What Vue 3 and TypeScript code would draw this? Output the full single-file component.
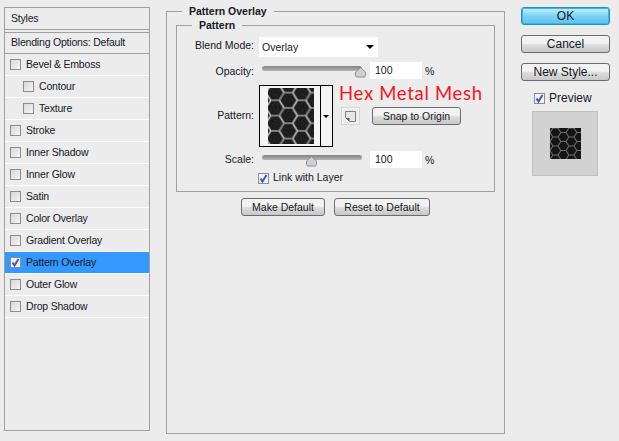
<script setup lang="ts">
interface Row { label: string; indent?: boolean; checked?: boolean; active?: boolean }
const rows: Row[] = [
  { label: 'Bevel & Emboss' },
  { label: 'Contour', indent: true },
  { label: 'Texture', indent: true },
  { label: 'Stroke' },
  { label: 'Inner Shadow' },
  { label: 'Inner Glow' },
  { label: 'Satin' },
  { label: 'Color Overlay' },
  { label: 'Gradient Overlay' },
  { label: 'Pattern Overlay', checked: true, active: true },
  { label: 'Outer Glow' },
  { label: 'Drop Shadow' },
]
</script>

<template>
  <div class="dialog">
    <aside class="styles">
      <div class="head">Styles</div>
      <div class="blend">Blending Options: Default</div>
      <div v-for="r in rows" :key="r.label" class="row" :class="{ indent: r.indent, active: r.active }">
        <span class="check" :class="{ on: r.checked }">
          <svg v-if="r.checked" viewBox="0 0 9 9" width="9" height="9"><path d="M1.5 4.5l2 3 4-6.5" fill="none" stroke="#3f55d0" stroke-width="2" /></svg>
        </span>
        <span class="rowlabel">{{ r.label }}</span>
      </div>
    </aside>

    <main class="center">
      <fieldset class="outer">
        <legend class="b">Pattern Overlay</legend>
        <fieldset class="inner">
          <legend class="b">Pattern</legend>
          <div class="form">
            <label>Blend Mode:</label>
            <div class="select"><span>Overlay</span><i class="caret"></i></div>

            <label class="op">Opacity:</label>
            <div class="slidewrap op">
              <div class="slider end">
                <svg class="thumb" width="11" height="11" viewBox="0 0 11 11"><path d="M5.5.7l5 4.3v3.5q0 1.5-1.5 1.5H2q-1.5 0-1.5-1.5V5z" fill="#d0d0d0" stroke="#909090" /></svg>
              </div>
              <span class="num">100</span><span class="pct">%</span>
            </div>

            <label class="pl">Pattern:</label>
            <div class="patternline">
              <div class="swatchbox">
                <span class="swatchcell">
                  <svg width="46" height="56" class="mesh">
                    <defs>
                      <filter id="grain" x="0" y="0" width="100%" height="100%">
                        <feTurbulence type="fractalNoise" baseFrequency="0.9" numOctaves="2" seed="4" />
                        <feColorMatrix values="0 0 0 0 1  0 0 0 0 1  0 0 0 0 1  .5 0 0 0 -.12" />
                      </filter>
                      <pattern id="hexa" width="28" height="18" patternUnits="userSpaceOnUse" patternTransform="translate(-2 -3) scale(.95 .85)">
                        <rect width="28" height="18" fill="#141414" />
                        <path d="M0 9L5 0H14L19 9H28M0 9L5 18H14L19 9" fill="none" stroke="#7c7c7c" stroke-width="2.2" />
                        <path d="M0 9L5 0M14 0L19 9M5 18L0 9" fill="none" stroke="#dcdcdc" stroke-width="1" />
                      </pattern>
                    </defs>
                    <rect width="46" height="56" fill="url(#hexa)" />
                    <rect width="46" height="56" filter="url(#grain)" opacity=".35" />
                  </svg>
                </span>
                <span class="swatcharrow"><i></i></span>
              </div>
              <div class="patternright">
                <div class="hex">Hex Metal Mesh</div>
                <div class="snapline">
                  <span class="iconbtn">
                    <svg width="11" height="11" viewBox="0 0 11 11"><path d="M.5.5h10v10h-6l-4-4z" fill="#e6e6e6" stroke="#808080" /><path d="M1 7h3.5v3.5z" fill="#555" /></svg>
                  </span>
                  <button class="btn snap">Snap to Origin</button>
                </div>
              </div>
            </div>

            <label class="sc">Scale:</label>
            <div class="slidewrap sc">
              <div class="slider mid">
                <svg class="thumb" width="11" height="11" viewBox="0 0 11 11"><path d="M5.5.7l5 4.3v3.5q0 1.5-1.5 1.5H2q-1.5 0-1.5-1.5V5z" fill="#d0d0d0" stroke="#909090" /></svg>
              </div>
              <span class="num">100</span><span class="pct">%</span>
            </div>

            <div class="linkline">
              <span class="check on"><svg viewBox="0 0 9 9" width="9" height="9"><path d="M1.5 4.5l2 3 4-6.5" fill="none" stroke="#3f55d0" stroke-width="2" /></svg></span>
              <span>Link with Layer</span>
            </div>
          </div>
        </fieldset>
        <div class="defaults">
          <button class="btn make">Make Default</button>
          <button class="btn reset">Reset to Default</button>
        </div>
      </fieldset>
    </main>

    <aside class="actions">
      <button class="btn big ok">OK</button>
      <button class="btn big">Cancel</button>
      <button class="btn big">New Style...</button>
      <div class="previewline">
        <span class="check on"><svg viewBox="0 0 9 9" width="9" height="9"><path d="M1.5 4.5l2 3 4-6.5" fill="none" stroke="#3f55d0" stroke-width="2" /></svg></span>
        <span>Preview</span>
      </div>
      <div class="thumbbox">
        <svg width="31" height="31">
          <defs>
            <pattern id="hexb" width="28" height="18" patternUnits="userSpaceOnUse" patternTransform="scale(.57 .5)">
              <rect width="28" height="18" fill="#141414" />
              <path d="M0 9L5 0H14L19 9H28M0 9L5 18H14L19 9" fill="none" stroke="#6e6e6e" stroke-width="1.8" />
            </pattern>
          </defs>
          <rect width="31" height="31" fill="url(#hexb)" />
        </svg>
      </div>
    </aside>
  </div>
</template>

<style>
html, body { margin: 0; background: #ececec; }
</style>

<style scoped>
.dialog {
  width: 619px; height: 441px; box-sizing: border-box; overflow: hidden;
  display: flex; padding: 7px 0 0 4px; background: #ececec; color: #16181f;
  font: 10.5px/14px "Liberation Sans", Tahoma, sans-serif;
}
.b { font-weight: 700; }
.styles {
  width: 146px; height: 424px; box-sizing: border-box; flex: none;
  border: 1px solid #a0a0a0; letter-spacing: -.2px;
}
.head { height: 21px; line-height: 20px; padding-left: 6px; border-bottom: 1px solid #a0a0a0; }
.blend { height: 20px; line-height: 19px; padding-left: 6px; margin-top: 2px; border-top: 1px solid #a0a0a0; border-bottom: 1px solid #a0a0a0; }
.row { height: 21px; display: flex; align-items: center; gap: 5px; padding-left: 5px; border-bottom: 1px solid #fff; }
.rowlabel { padding-bottom: 1px; }
.row.indent { padding-left: 18px; }
.row.active { background: #3399ff; }
.check {
  width: 9px; height: 9px; flex: none; border: 1px solid #8c8c8c; background: linear-gradient(135deg, #d8d8d8, #f6f6f6);
  display: inline-flex;
}
.check.on { background: #f2f2f2; }
.center { width: 339px; margin-left: 16px; flex: none; }
fieldset { margin: 0; min-width: 0; border: 1px solid #a0a0a0; }
legend { padding: 0 7px; line-height: 14px; }
.outer { height: 430px; box-sizing: border-box; padding: 0 6px 0 9px; margin-top: -3px; }
.outer > legend { margin-left: 6px; }
.inner { height: 174px; box-sizing: border-box; padding: 0; width: 319px; }
.inner > legend { margin-left: 15px; }
.form { display: grid; grid-template-columns: 77px 1fr; column-gap: 5px; align-items: center; }
.form label { text-align: right; }
.select {
  width: 119px; height: 20px; background: #fff; display: flex; align-items: center; justify-content: space-between;
  padding: 0 4px 0 3px; box-sizing: border-box; margin-top: 5px;
}
.caret { border: 4px solid transparent; border-top: 4px solid #000; border-bottom: 0; }
label.op { margin-top: 5px; }
.slidewrap { display: flex; align-items: center; }
.slidewrap.op { margin-top: 5px; }
.slider {
  width: 100px; height: 5px; margin-left: 3px; border-radius: 3px; position: relative; margin-top: -5px;
  background: linear-gradient(#848484, #b4b4b4);
}
.thumb { position: absolute; top: 1px; display: block; }
.slider.end .thumb { left: 93px; }
.slider.mid .thumb { left: 44px; }
.num { width: 52px; height: 17px; line-height: 17px; background: #fff; margin-left: 8px; padding-left: 5px; box-sizing: border-box; }
.pct { margin-left: 3px; }
label.pl { margin-top: 4px; }
.patternline { display: flex; margin-top: 6px; }
.swatchbox { width: 74px; height: 62px; border: 1px solid #000; box-sizing: border-box; display: flex; flex: none; background: #f4f4f4; }
.swatchcell { width: 61px; border-right: 1px solid #000; box-sizing: border-box; display: flex; align-items: center; justify-content: center; }
.mesh { display: block; margin-left: 1px; }
.swatcharrow { flex: 1; display: flex; align-items: center; justify-content: center; padding-right: 1px; }
.swatcharrow i { border: 3px solid transparent; border-top: 3px solid #000; border-bottom: 0; }
.patternright { margin-left: 8px; }
.hex { color: #f5141e; font: 400 18.5px/20px Lato, sans-serif; letter-spacing: .7px; margin: -2px 0 0 -2px; height: 24px; white-space: nowrap; }
.snapline { display: flex; align-items: flex-start; gap: 12px; }
.iconbtn { width: 19px; height: 18px; box-sizing: border-box; border: 1px solid #d4d4d4; box-shadow: inset 0 0 0 1px #f6f6f6; display: flex; align-items: center; justify-content: center; }
.btn {
  display: block; font: 10.5px/14px "Liberation Sans", Tahoma, sans-serif; color: #16181f; padding: 0; height: 18px;
  border: 1px solid #6c6c6c; border-radius: 3px; background: linear-gradient(#f2f2f2 0 45%, #dcdcdc 55%, #c8c8c8);
  box-sizing: border-box;
}
.snap { width: 89px; }
label.sc { margin-top: 2px; }
.slidewrap.sc { margin-top: 4px; }
.linkline { grid-column: 2; display: flex; align-items: center; gap: 4px; margin: 2px 0 0 -1px; }
.linkline span:last-child { padding-bottom: 2px; }
.defaults { display: flex; gap: 9px; margin: 6px 0 0 65px; }
.make { width: 84px; }
.reset { width: 96px; }
.actions { margin-left: 16px; width: 89px; flex: none; display: flex; flex-direction: column; }
.big { width: 89px; height: 18px; margin-bottom: 10px; font-size: 12px; }
.ok { border-color: #1a96cc; background: linear-gradient(#c8f0ff, #7cd2f4 50%, #5cc4ee); box-shadow: 0 0 0 1px #3ab4e8 inset; }
.previewline { display: flex; align-items: center; gap: 4px; margin: 0 0 0 13px; font-size: 12px; }
.thumbbox {
  width: 66px; height: 65px; box-sizing: border-box; margin: 6px 0 0 11px; background: #d2d2d2; border: 1px solid #c0c0c0;
  display: flex; align-items: center; justify-content: center;
}
.thumbbox svg { display: block; }
</style>
